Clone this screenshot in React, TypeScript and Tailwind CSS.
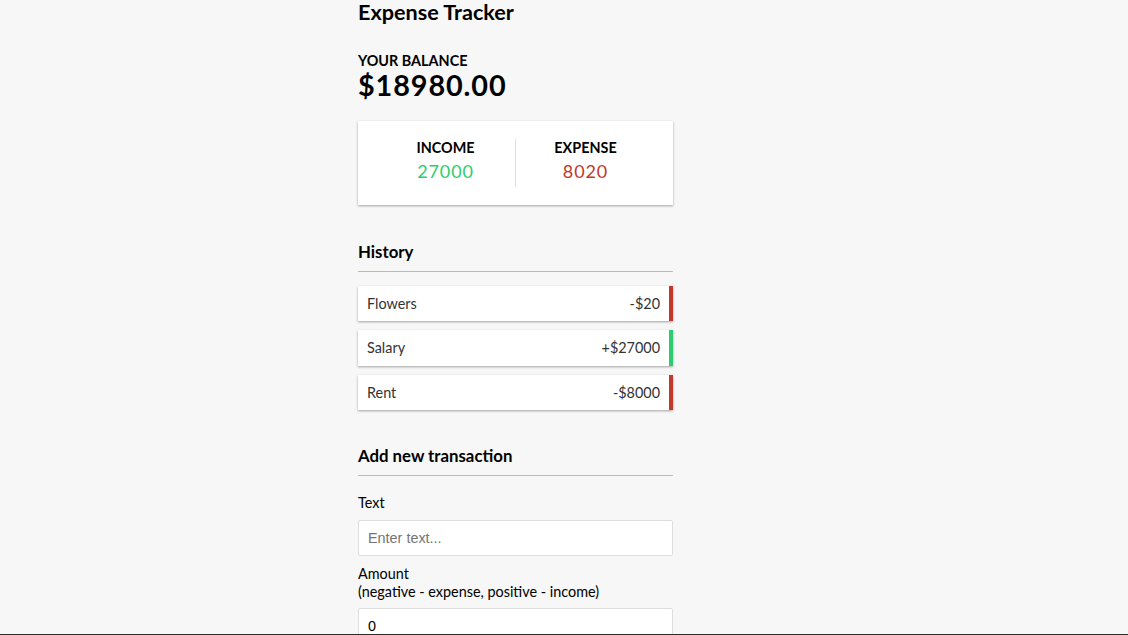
const lato = { fontFamily: "Lato, 'Open Sans', sans-serif" };

type Tx = { id: number; text: string; amount: number };

const transactions: Tx[] = [
  { id: 1, text: "Flowers", amount: -20 },
  { id: 2, text: "Salary", amount: 27000 },
  { id: 3, text: "Rent", amount: -8000 },
];

function TxItem({ tx }: { tx: Tx }) {
  const sign = tx.amount < 0 ? "-" : "+";
  return (
    <li
      className={
        "flex justify-between bg-white p-[9px] text-[14.4px] leading-[1.2] text-[#333] shadow-[0_1px_3px_rgba(0,0,0,0.12),0_1px_2px_rgba(0,0,0,0.24)] " +
        (tx.amount < 0 ? "border-r-[4.5px] border-[#c0392b]" : "border-r-[4.5px] border-[#2ecc71]")
      }
    >
      <span>{tx.text}</span>
      <span>
        {sign}${Math.abs(tx.amount)}
      </span>
    </li>
  );
}

export default function App() {
  const income = transactions.filter((t) => t.amount > 0).reduce((a, t) => a + t.amount, 0);
  const expense = transactions.filter((t) => t.amount < 0).reduce((a, t) => a - t.amount, 0);
  const balance = (income - expense).toFixed(2);

  return (
    <div className="h-[635px] overflow-hidden border-b border-[#2b2b2b] bg-[#f7f7f7]" style={lato}>
      <div className="ml-[358px] w-[315px] text-black">
        <h2 className="text-[21.6px] font-bold leading-[1.2]">Expense Tracker</h2>

        <h4 className="mt-[26px] text-[14.4px] font-bold uppercase leading-[1.2]">Your Balance</h4>
        <h1 className="-mt-[1px] text-[28.8px] font-bold leading-[1.2] tracking-[0.9px]">${balance}</h1>

        <div className="mt-[18px] flex bg-white p-[18px] shadow-[0_1px_3px_rgba(0,0,0,0.12),0_1px_2px_rgba(0,0,0,0.24)]">
          <div className="flex-1 border-r border-[#dedede] text-center">
            <h4 className="text-[14.4px] font-bold uppercase leading-[1.2]">Income</h4>
            <p className="my-[4.5px] text-[18px] leading-[1.2] tracking-[0.9px] text-[#2ecc71]">{income}</p>
          </div>
          <div className="flex-1 text-center">
            <h4 className="text-[14.4px] font-bold uppercase leading-[1.2]">Expense</h4>
            <p className="my-[4.5px] text-[18px] leading-[1.2] tracking-[0.9px] text-[#c0392b]">{expense}</p>
          </div>
        </div>

        <h3 className="mt-[37px] border-b border-[#bbb] pb-[9px] text-[16.8px] font-bold leading-[1.2]">History</h3>
        <ul className="mt-[14.4px] flex flex-col gap-[9px]">
          {transactions.map((t) => (
            <TxItem key={t.id} tx={t} />
          ))}
        </ul>

        <h3 className="mt-[36px] border-b border-[#bbb] pb-[9px] text-[16.8px] font-bold leading-[1.2]">
          Add new transaction
        </h3>
        <form className="mt-[18px]" onSubmit={(e) => e.preventDefault()}>
          <label className="block text-[14.4px] leading-[1.2]">Text</label>
          <input
            type="text"
            placeholder="Enter text..."
            className="mt-[9px] block h-[36px] w-full rounded-[2px] border border-[#dedede] bg-white px-[9px] text-[14.4px] outline-none placeholder:text-[#757575]"
            style={{ fontFamily: "'Liberation Sans', Arial, sans-serif" }}
          />
          <label className="mt-[9px] block text-[14.4px] leading-[1.2]">
            Amount
            <br />
            (negative - expense, positive - income)
          </label>
          <input
            type="number"
            defaultValue={0}
            className="mt-[8px] block h-[36px] w-full rounded-[2px] border border-[#dedede] bg-white px-[9px] text-[14.4px] outline-none"
            style={{ fontFamily: "'Liberation Sans', Arial, sans-serif" }}
          />
        </form>
      </div>
    </div>
  );
}
